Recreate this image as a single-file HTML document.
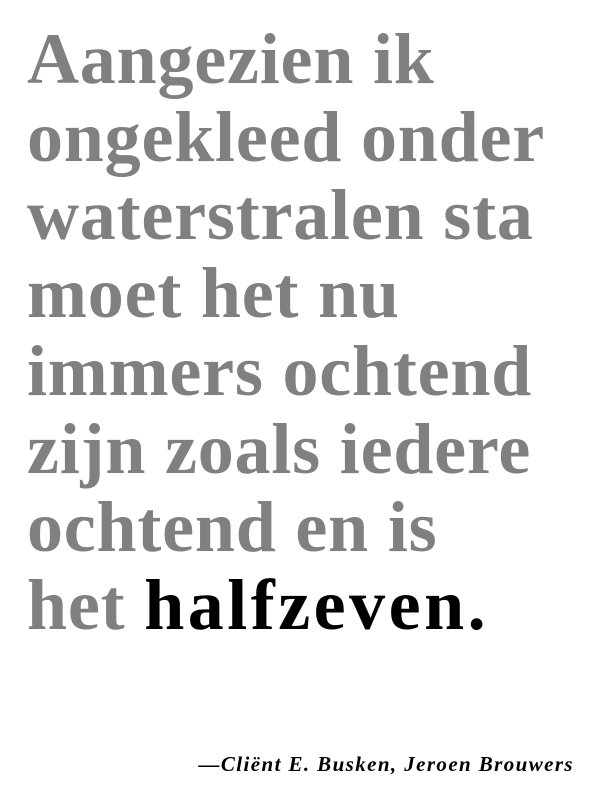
<!DOCTYPE html>
<html><head><meta charset="utf-8"><style>
body{margin:0;width:600px;height:800px;background:#fff;position:relative;overflow:hidden}
.q{position:absolute;left:27px;top:20px;font-family:"Liberation Serif",serif;font-weight:bold;font-size:72px;line-height:78px;color:#808080;white-space:nowrap;letter-spacing:0.8px}
.q b{color:#000;letter-spacing:3.5px}
.a{position:absolute;right:26px;top:752px;font-family:"Liberation Serif",serif;font-weight:bold;font-style:italic;font-size:21px;letter-spacing:1.4px;color:#000;white-space:nowrap}
</style></head><body>
<div class="q">Aangezien ik<br>ongekleed onder<br>waterstralen sta<br>moet het nu<br>immers ochtend<br>zijn zoals iedere<br>ochtend en is<br>het <b>halfzeven.</b></div>
<div class="a">—Cliënt E. Busken, Jeroen Brouwers</div>
</body></html>
